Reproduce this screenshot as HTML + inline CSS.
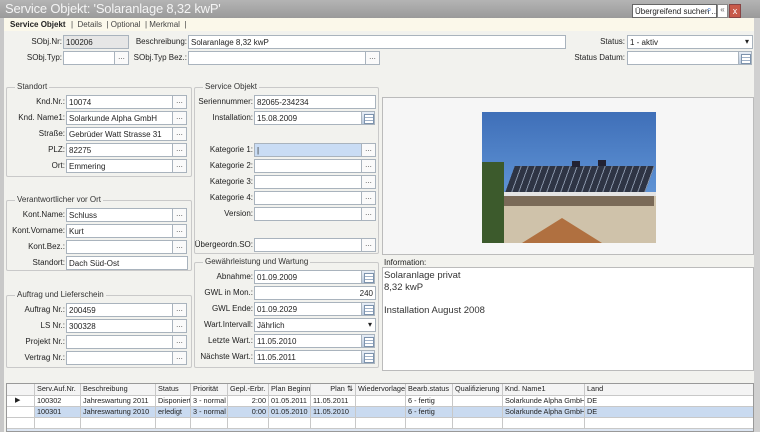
<!DOCTYPE html>
<html><head><meta charset="utf-8"><style>
*{box-sizing:border-box;margin:0;padding:0}
body{width:760px;height:432px;overflow:hidden;background:#f2f2ee;font-family:"Liberation Sans",sans-serif;font-size:8px;color:#222;position:relative}
div,span{position:absolute}
.t{white-space:nowrap}
.l{text-align:right;white-space:nowrap}
.i{background:#fff;border:1px solid #a9b3bd;height:14px;padding:1px 2px;white-space:nowrap;line-height:11px;overflow:hidden}
.b{background:#fafafa;border:1px solid #a9b3bd;height:14px;width:15px;text-align:center;line-height:10px;color:#555}
.c{border:1px solid #a9b3bd;height:14px;width:14px;background:linear-gradient(#e8eef6,#b8c8dc)}
.c:after{content:"";position:absolute;left:2px;top:2px;width:8px;height:8px;border:1px solid #7d93ad;background:repeating-linear-gradient(#fff 0 2px,#9fb1c8 2px 3px)}
.f{border:1px solid #c9c9c9;border-radius:2px}
.lg{background:#f2f2ee;padding:0 2px;top:-6px;left:8px;white-space:nowrap;color:#333}
.g{border-right:1px solid #c8c8c8;height:100%;top:0;padding-left:2px;white-space:nowrap;line-height:10px;overflow:hidden;font-size:7.3px}
</style></head><body>
<div style="left:0;top:0;width:760px;height:18px;background:linear-gradient(#b4b4b4,#9a9a9a)"></div>
<div class="t" style="left:5px;top:1px;font-size:13px;color:#f4f4f4;letter-spacing:-0.2px">Service Objekt: 'Solaranlage 8,32 kwP'</div>
<div class="i" style="left:632px;top:4px;width:85px;height:14px;border-color:#666;font-size:8px;overflow:visible">Übergreifend suchen ... <span style="left:74px;top:-1px;color:#3a6fc0">⌕</span></div>
<div style="left:717px;top:4px;width:11px;height:14px;background:#fff;border:1px solid #888;font-size:8px;text-align:center;color:#666">«</div>
<div style="left:729px;top:4px;width:12px;height:14px;background:#c85a4a;border:1px solid #844;color:#fff;font-size:9px;text-align:center;line-height:12px">x</div>
<div style="left:0;top:18px;width:4px;height:414px;background:#c8c8c8"></div>
<div style="left:754px;top:18px;width:6px;height:414px;background:#d0d0d0"></div>
<div style="left:4px;top:18px;width:750px;height:13px;background:#fbf8ea"></div>
<div class="t" style="left:10px;top:20px;font-weight:bold">Service Objekt</div>
<div class="t" style="left:71px;top:20px;color:#444">|&nbsp; Details &nbsp;| Optional &nbsp;| Merkmal &nbsp;|</div>

<div class="l" style="right:698px;top:37px">SObj.Nr:</div>
<div class="i" style="left:63px;top:35px;width:66px;background:#e6e6e6">100206</div>
<div class="l" style="right:573px;top:37px">Beschreibung:</div>
<div class="i" style="left:188px;top:35px;width:378px">Solaranlage 8,32 kwP</div>
<div class="l" style="right:135px;top:37px">Status:</div>
<div class="i" style="left:627px;top:35px;width:126px">1 - aktiv<span style="right:3px;top:0">▾</span></div>
<div class="l" style="right:698px;top:53px">SObj.Typ:</div>
<div class="i" style="left:63px;top:51px;width:52px"></div><div class="b" style="left:114px;top:51px">...</div>
<div class="l" style="right:573px;top:53px">SObj.Typ Bez.:</div>
<div class="i" style="left:188px;top:51px;width:178px"></div><div class="b" style="left:365px;top:51px">...</div>
<div class="l" style="right:135px;top:53px">Status Datum:</div>
<div class="i" style="left:627px;top:51px;width:112px"></div><div class="c" style="left:738px;top:51px"></div>

<div class="f" style="left:6px;top:87px;width:186px;height:90px"><span class="lg">Standort</span></div>
<div class="l" style="right:695px;top:97px">Knd.Nr.:</div><div class="i" style="left:66px;top:95px;width:107px">10074</div><div class="b" style="left:172px;top:95px">...</div>
<div class="l" style="right:695px;top:113px">Knd. Name1:</div><div class="i" style="left:66px;top:111px;width:107px">Solarkunde Alpha GmbH</div><div class="b" style="left:172px;top:111px">...</div>
<div class="l" style="right:695px;top:129px">Straße:</div><div class="i" style="left:66px;top:127px;width:107px">Gebrüder Watt Strasse 31</div><div class="b" style="left:172px;top:127px">...</div>
<div class="l" style="right:695px;top:145px">PLZ:</div><div class="i" style="left:66px;top:143px;width:107px">82275</div><div class="b" style="left:172px;top:143px">...</div>
<div class="l" style="right:695px;top:161px">Ort:</div><div class="i" style="left:66px;top:159px;width:107px">Emmering</div><div class="b" style="left:172px;top:159px">...</div>

<div class="f" style="left:6px;top:200px;width:186px;height:71px"><span class="lg">Verantwortlicher vor Ort</span></div>
<div class="l" style="right:695px;top:210px">Kont.Name:</div><div class="i" style="left:66px;top:208px;width:107px">Schluss</div><div class="b" style="left:172px;top:208px">...</div>
<div class="l" style="right:695px;top:226px">Kont.Vorname:</div><div class="i" style="left:66px;top:224px;width:107px">Kurt</div><div class="b" style="left:172px;top:224px">...</div>
<div class="l" style="right:695px;top:242px">Kont.Bez.:</div><div class="i" style="left:66px;top:240px;width:107px"></div><div class="b" style="left:172px;top:240px">...</div>
<div class="l" style="right:695px;top:258px">Standort:</div><div class="i" style="left:66px;top:256px;width:122px">Dach Süd-Ost</div>

<div class="f" style="left:6px;top:295px;width:186px;height:73px"><span class="lg">Auftrag und Lieferschein</span></div>
<div class="l" style="right:695px;top:305px">Auftrag Nr.:</div><div class="i" style="left:66px;top:303px;width:107px">200459</div><div class="b" style="left:172px;top:303px">...</div>
<div class="l" style="right:695px;top:321px">LS Nr.:</div><div class="i" style="left:66px;top:319px;width:107px">300328</div><div class="b" style="left:172px;top:319px">...</div>
<div class="l" style="right:695px;top:337px">Projekt Nr.:</div><div class="i" style="left:66px;top:335px;width:107px"></div><div class="b" style="left:172px;top:335px">...</div>
<div class="l" style="right:695px;top:353px">Vertrag Nr.:</div><div class="i" style="left:66px;top:351px;width:107px"></div><div class="b" style="left:172px;top:351px">...</div>

<div class="f" style="left:194px;top:87px;width:185px;height:167px"><span class="lg">Service Objekt</span></div>
<div class="l" style="right:507px;top:97px">Seriennummer:</div><div class="i" style="left:254px;top:95px;width:122px">82065-234234</div>
<div class="l" style="right:507px;top:113px">Installation:</div><div class="i" style="left:254px;top:111px;width:108px">15.08.2009</div><div class="c" style="left:361px;top:111px"></div>
<div class="l" style="right:507px;top:145px">Kategorie 1:</div><div class="i" style="left:254px;top:143px;width:108px;background:#c9dcf4">|</div><div class="b" style="left:361px;top:143px">...</div>
<div class="l" style="right:507px;top:161px">Kategorie 2:</div><div class="i" style="left:254px;top:159px;width:108px"></div><div class="b" style="left:361px;top:159px">...</div>
<div class="l" style="right:507px;top:177px">Kategorie 3:</div><div class="i" style="left:254px;top:175px;width:108px"></div><div class="b" style="left:361px;top:175px">...</div>
<div class="l" style="right:507px;top:193px">Kategorie 4:</div><div class="i" style="left:254px;top:191px;width:108px"></div><div class="b" style="left:361px;top:191px">...</div>
<div class="l" style="right:507px;top:209px">Version:</div><div class="i" style="left:254px;top:207px;width:108px"></div><div class="b" style="left:361px;top:207px">...</div>
<div class="l" style="right:507px;top:240px">Übergeordn.SO:</div><div class="i" style="left:254px;top:238px;width:108px"></div><div class="b" style="left:361px;top:238px">...</div>

<div class="f" style="left:194px;top:262px;width:185px;height:106px"><span class="lg">Gewährleistung und Wartung</span></div>
<div class="l" style="right:507px;top:272px">Abnahme:</div><div class="i" style="left:254px;top:270px;width:108px">01.09.2009</div><div class="c" style="left:361px;top:270px"></div>
<div class="l" style="right:507px;top:288px">GWL in Mon.:</div><div class="i" style="left:254px;top:286px;width:122px;text-align:right">240</div>
<div class="l" style="right:507px;top:304px">GWL Ende:</div><div class="i" style="left:254px;top:302px;width:108px">01.09.2029</div><div class="c" style="left:361px;top:302px"></div>
<div class="l" style="right:507px;top:320px">Wart.Intervall:</div><div class="i" style="left:254px;top:318px;width:122px">Jährlich<span style="right:3px;top:0">▾</span></div>
<div class="l" style="right:507px;top:336px">Letzte Wart.:</div><div class="i" style="left:254px;top:334px;width:108px">11.05.2010</div><div class="c" style="left:361px;top:334px"></div>
<div class="l" style="right:507px;top:352px">Nächste Wart.:</div><div class="i" style="left:254px;top:350px;width:108px">11.05.2011</div><div class="c" style="left:361px;top:350px"></div>

<div style="left:382px;top:97px;width:372px;height:158px;border:1px solid #bbb;background:#f6f6f6"></div>
<div style="left:482px;top:112px;width:174px;height:131px;background:linear-gradient(#3f6fb8,#5b8fd2 55%,#7aa6da);overflow:hidden">
 <div style="left:28px;top:54px;width:140px;height:26px;background:repeating-linear-gradient(90deg,#2e3444 0 6px,#8c98ac 6px 7px);transform:skewX(-20deg)"></div>
 <div style="left:10px;top:80px;width:164px;height:4px;background:#e4e4e4"></div>
 <div style="left:14px;top:84px;width:160px;height:47px;background:#cfc2aa"></div>
 <div style="left:22px;top:84px;width:150px;height:10px;background:#7a6a58"></div>
 <div style="left:0;top:50px;width:22px;height:81px;background:#3c5a2c"></div>
 <div style="left:40px;top:106px;width:80px;height:25px;background:#b07040;clip-path:polygon(0 100%,50% 0,100% 100%)"></div>
 <div style="left:90px;top:49px;width:8px;height:6px;background:#223"></div><div style="left:116px;top:48px;width:8px;height:6px;background:#223"></div>
</div>
<div class="t" style="left:384px;top:258px">Information:</div>
<div style="left:382px;top:267px;width:372px;height:104px;background:#fff;border:1px solid #bbb;font-size:9.5px;line-height:11.5px;padding:2px 1px;color:#333">Solaranlage privat<br>8,32 kwP<br><br>Installation August 2008</div>

<div style="left:6px;top:383px;width:748px;height:49px;background:#fff;border:1px solid #999;overflow:hidden">
 <div style="left:0;top:0;width:748px;height:12px;background:#f4f4f4;border-bottom:1px solid #c8c8c8">
  <div class="g" style="left:0;width:28px"></div><div class="g" style="left:28px;width:46px">Serv.Auf.Nr.</div><div class="g" style="left:74px;width:75px">Beschreibung</div><div class="g" style="left:149px;width:35px">Status</div><div class="g" style="left:184px;width:37px">Priorität</div><div class="g" style="left:221px;width:41px">Gepl.-Erbr.</div><div class="g" style="left:262px;width:42px">Plan Beginn</div><div class="g" style="left:304px;width:45px;text-align:right;padding-right:2px">Plan ⇅</div><div class="g" style="left:349px;width:50px">Wiedervorlage</div><div class="g" style="left:399px;width:47px">Bearb.status</div><div class="g" style="left:446px;width:50px">Qualifizierung</div><div class="g" style="left:496px;width:82px">Knd. Name1</div><div class="g" style="left:578px;width:170px">Land</div>
 </div>
 <div style="left:0;top:12px;width:748px;height:11px;border-bottom:1px solid #c8c8c8">
  <div class="g" style="left:0;width:28px;padding-left:8px;font-size:7px">▶</div><div class="g" style="left:28px;width:46px">100302</div><div class="g" style="left:74px;width:75px">Jahreswartung 2011</div><div class="g" style="left:149px;width:35px">Disponiert</div><div class="g" style="left:184px;width:37px">3 - normal</div><div class="g" style="left:221px;width:41px;text-align:right;padding-right:2px">2:00</div><div class="g" style="left:262px;width:42px">01.05.2011</div><div class="g" style="left:304px;width:45px">11.05.2011</div><div class="g" style="left:349px;width:50px"></div><div class="g" style="left:399px;width:47px">6 - fertig</div><div class="g" style="left:446px;width:50px"></div><div class="g" style="left:496px;width:82px">Solarkunde Alpha GmbH</div><div class="g" style="left:578px;width:170px">DE</div>
 </div>
 <div style="left:0;top:23px;width:748px;height:11px;background:#c9daf0;border-bottom:1px solid #c8c8c8">
  <div class="g" style="left:0;width:28px;background:#fff"></div><div class="g" style="left:28px;width:46px">100301</div><div class="g" style="left:74px;width:75px">Jahreswartung 2010</div><div class="g" style="left:149px;width:35px">erledigt</div><div class="g" style="left:184px;width:37px">3 - normal</div><div class="g" style="left:221px;width:41px;text-align:right;padding-right:2px">0:00</div><div class="g" style="left:262px;width:42px">01.05.2010</div><div class="g" style="left:304px;width:45px">11.05.2010</div><div class="g" style="left:349px;width:50px"></div><div class="g" style="left:399px;width:47px">6 - fertig</div><div class="g" style="left:446px;width:50px"></div><div class="g" style="left:496px;width:82px">Solarkunde Alpha GmbH</div><div class="g" style="left:578px;width:170px">DE</div>
 </div>
 <div style="left:0;top:34px;width:748px;height:11px;border-bottom:1px solid #c8c8c8">
  <div class="g" style="left:0;width:28px"></div><div class="g" style="left:28px;width:46px"></div><div class="g" style="left:74px;width:75px"></div><div class="g" style="left:149px;width:35px"></div><div class="g" style="left:184px;width:37px"></div><div class="g" style="left:221px;width:41px"></div><div class="g" style="left:262px;width:42px"></div><div class="g" style="left:304px;width:45px"></div><div class="g" style="left:349px;width:50px"></div><div class="g" style="left:399px;width:47px"></div><div class="g" style="left:446px;width:50px"></div><div class="g" style="left:496px;width:82px"></div>
 </div>
 <div style="left:0;top:45px;width:748px;height:4px;background:#dde6f2"></div>
</div>
</body></html>
